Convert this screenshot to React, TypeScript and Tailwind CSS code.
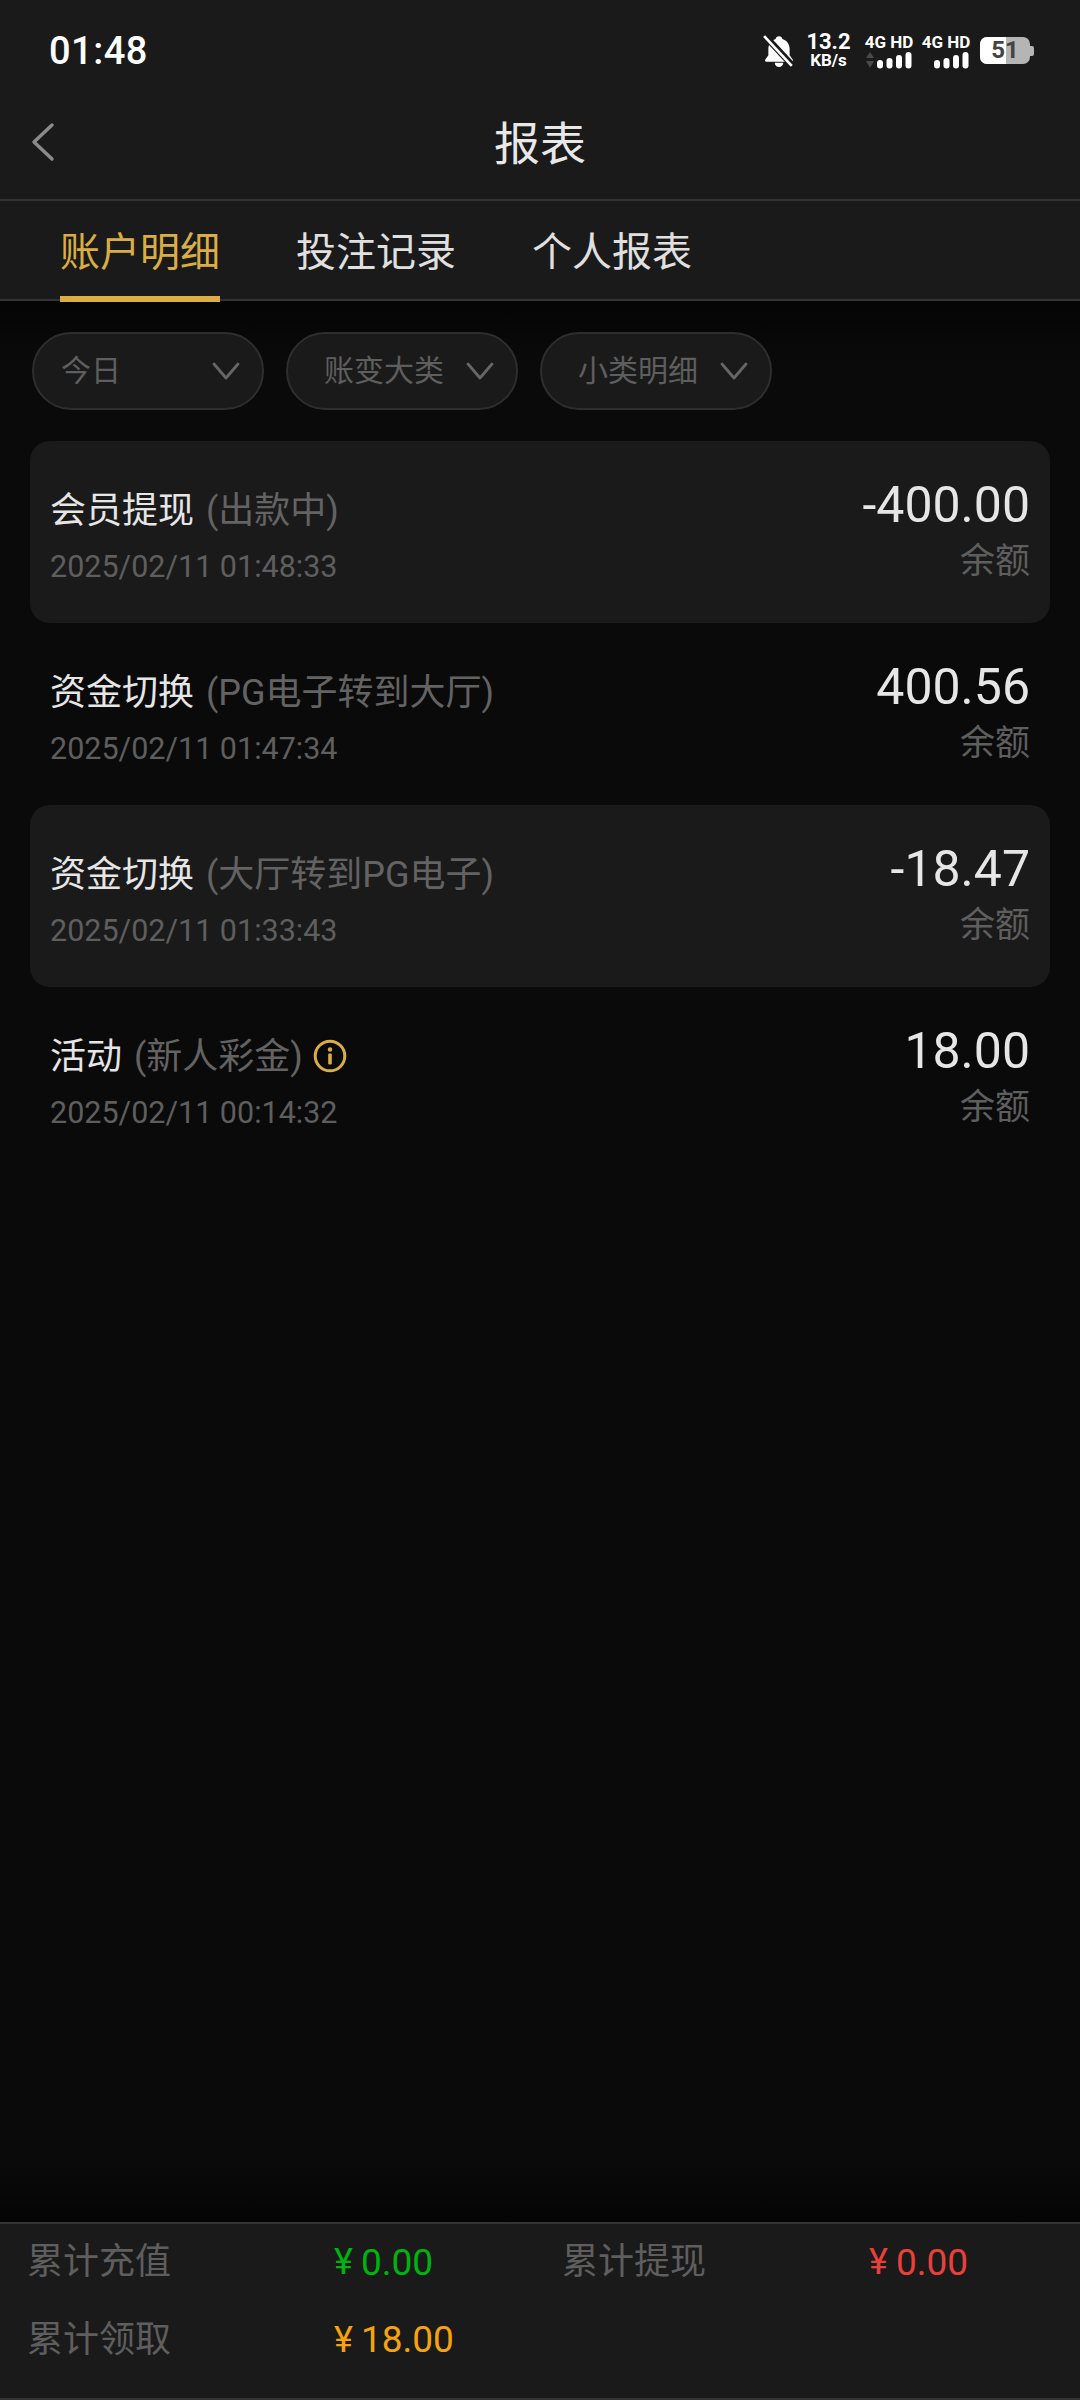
import React from "react";

const FONT = "font-['Roboto','Noto_Sans_CJK_SC',sans-serif]";

function Signal({ arrows }: { arrows?: boolean }) {
  return (
    <svg width="48" height="18" viewBox="0 0 48 18" className="block">
      {arrows && (
        <>
          <path d="M5 1 L9 7 L1 7 Z" fill="#4a4a4a" />
          <path d="M5 17 L9 10 L1 10 Z" fill="#4a4a4a" />
        </>
      )}
      <rect x="12" y="9" width="6" height="8.5" rx="3" fill="#fff" />
      <rect x="21.5" y="7" width="6" height="10.5" rx="3" fill="#fff" />
      <rect x="31" y="4" width="6" height="13.5" rx="3" fill="#fff" />
      <rect x="40.5" y="1" width="6" height="16.5" rx="3" fill="#fff" />
    </svg>
  );
}

function Net({ arrows }: { arrows?: boolean }) {
  return (
    <div className="flex w-[48px] flex-col items-center">
      <span className="whitespace-nowrap text-[17px] font-bold leading-[18px] text-white">4G HD</span>
      <Signal arrows={arrows} />
    </div>
  );
}

function StatusBar() {
  return (
    <div className="flex h-[101px] items-center justify-between pl-[49px] pr-[46px]">
      <span className="text-[38px] font-medium leading-none tracking-[0.5px] text-white">01:48</span>
      <div className="flex items-center">
        <svg width="32" height="34" viewBox="0 0 30 32" className="mr-[11px]">
          <path
            d="M15 2c1.7 0 3 1.1 3.2 2.6 4.3 1.3 6.8 5 6.8 9.4v6l3 4.2c.5.8 0 1.8-1 1.8H3c-1 0-1.500-1-1-1.800L5 20v-6c0-4.400 2.500-8.100 6.800-9.400C12 3.100 13.300 2 15 2z"
            fill="#fff"
          />
          <path d="M11 27h8c0 2.300-1.800 4-4 4s-4-1.700-4-4z" fill="#fff" />
          <path d="M2 2 L28 30" stroke="#1a1a1a" strokeWidth="6" />
          <path d="M1 2 L27 30" stroke="#fff" strokeWidth="2.500" />
        </svg>
        <div className="mr-[14px] flex w-[45px] flex-col items-center font-bold text-white">
          <span className="text-[22px] leading-[20px]">13.2</span>
          <span className="text-[17px] leading-[17px]">KB/s</span>
        </div>
        <div className="mr-[9px]">
          <Net arrows />
        </div>
        <div className="mr-[10px]">
          <Net />
        </div>
        <div className="relative flex h-[27px] w-[54px] items-center">
          <div className="relative h-[27px] w-[50px] overflow-hidden rounded-[7px] bg-[#b5b5b5]">
            <div className="h-full w-[26px] bg-white" />
          </div>
          <div className="h-[10px] w-[4px] rounded-r-[2px] bg-[#b5b5b5]" />
          <span className="absolute left-0 top-0 w-[50px] text-center text-[24px] font-bold leading-[27px] text-[#444]">
            51
          </span>
        </div>
      </div>
    </div>
  );
}

function Nav() {
  return (
    <div className="relative flex h-[100px] items-center justify-center border-b-2 border-[#333] pb-[12px]">
      <svg width="26" height="40" viewBox="0 0 26 40" className="absolute left-[29px] top-[21px]">
        <path d="M23 3 L5 20 L23 37" fill="none" stroke="#8a8a8a" strokeWidth="3.500" strokeLinecap="round" strokeLinejoin="round" />
      </svg>
      <span className="text-[46px] leading-none text-[#e8e8e8]">报表</span>
    </div>
  );
}

function Tabs() {
  return (
    <div className="flex h-[100px] border-b-2 border-[#333] pl-[60px]">
      <div className="relative mr-[76px] flex h-full items-center">
        <span className="pt-[6px] text-[40px] leading-none text-[#d9ae45]">账户明细</span>
        <div className="absolute -bottom-[3px] left-0 h-[6px] w-[160px] bg-[#d9ae45]" />
      </div>
      <div className="mr-[76px] flex h-full items-center">
        <span className="pt-[6px] text-[40px] leading-none text-[#e0e0e0]">投注记录</span>
      </div>
      <div className="flex h-full items-center">
        <span className="pt-[6px] text-[40px] leading-none text-[#e0e0e0]">个人报表</span>
      </div>
    </div>
  );
}

function Pill({ label, between }: { label: string; between?: boolean }) {
  return (
    <div
      className={`flex h-[78px] w-[232px] items-center rounded-[39px] border-2 border-[#2e2e2e] bg-[#1a1a1a] ${
        between ? "justify-between pl-[27px] pr-[22px]" : "justify-end gap-[22px] pr-[22px]"
      }`}
    >
      <span className="whitespace-nowrap text-[30px] leading-none text-[#5e5e5e]">{label}</span>
      <svg width="28" height="18" viewBox="0 0 28 18">
        <path d="M2 2 L14 16 L26 2" fill="none" stroke="#666" strokeWidth="2.800" strokeLinecap="round" strokeLinejoin="round" />
      </svg>
    </div>
  );
}

type Row = {
  title: string;
  sub: string;
  time: string;
  amount: string;
  card?: boolean;
  info?: boolean;
};

const rows: Row[] = [
  { title: "会员提现", sub: "(出款中)", time: "2025/02/11 01:48:33", amount: "-400.00", card: true },
  { title: "资金切换", sub: "(PG电子转到大厅)", time: "2025/02/11 01:47:34", amount: "400.56" },
  { title: "资金切换", sub: "(大厅转到PG电子)", time: "2025/02/11 01:33:43", amount: "-18.47", card: true },
  { title: "活动", sub: "(新人彩金)", time: "2025/02/11 00:14:32", amount: "18.00", info: true },
];

function RecordRow({ r }: { r: Row }) {
  return (
    <div className={`flex h-[182px] justify-between rounded-[20px] px-[20px] pt-[45px] ${r.card ? "bg-[#1a1a1a]" : ""}`}>
      <div className="flex flex-col">
        <div className="flex h-[50px] items-center">
          <span className="text-[36px] leading-[50px] text-[#e6e6e6]">{r.title}</span>
          <span className="ml-[12px] text-[36px] leading-[50px] text-[#636363]">{r.sub}</span>
          {r.info && (
            <svg width="34" height="34" viewBox="0 0 34 34" className="ml-[10px] mt-[-2px]">
              <circle cx="17" cy="17" r="14.800" fill="none" stroke="#d9ae45" strokeWidth="3" />
              <circle cx="17" cy="10.500" r="2.200" fill="#d9ae45" />
              <rect x="15.200" y="14.500" width="3.600" height="11" rx="1" fill="#d9ae45" />
            </svg>
          )}
        </div>
        <span className="mt-[11px] text-[30.5px] leading-[40px] text-[#5e5e5e]">{r.time}</span>
      </div>
      <div className="flex flex-col items-end">
        <span className="mt-[-11px] text-[50px] leading-[60px] text-[#e6e6e6]">{r.amount}</span>
        <span className="mt-[5px] text-[35px] leading-[44px] text-[#5e5e5e]">余额</span>
      </div>
    </div>
  );
}

function Money({ value, color }: { value: string; color: string }) {
  return (
    <span className={`flex items-center gap-[8px] self-center text-[37px] ${color}`}>
      <span className="text-[36px]">¥</span>
      <span>{value}</span>
    </span>
  );
}

function Footer() {
  return (
    <div className="grid h-[178px] grid-cols-[307px_228px_307px_1fr] grid-rows-[76px_79px] content-start border-y-2 border-[#333] bg-[#1a1a1a] pl-[27px] text-[36px] leading-none">
      <span className="self-center text-[#5e5e5e]">累计充值</span>
      <Money value="0.00" color="text-[#00b30f]" />
      <span className="self-center text-[#5e5e5e]">累计提现</span>
      <Money value="0.00" color="text-[#e8413a]" />
      <span className="self-center text-[#5e5e5e]">累计领取</span>
      <Money value="18.00" color="text-[#f5a30f]" />
    </div>
  );
}

export default function App() {
  return (
    <div className={`flex h-[2400px] w-[1080px] flex-col bg-[#0a0a0a] ${FONT}`}>
      <div className="bg-[#1a1a1a]">
        <StatusBar />
        <Nav />
        <Tabs />
      </div>
      <div className="flex-1 bg-[linear-gradient(#040404,#0a0a0a_60px,#0a0a0a_calc(100%-60px),#040404)] px-[30px] pt-[31px]">
        <div className="flex gap-[22px] pl-[2px]">
          <Pill label="今日" between />
          <Pill label="账变大类" />
          <Pill label="小类明细" />
        </div>
        <div className="mt-[31px] flex flex-col">
          {rows.map((r) => (
            <RecordRow key={r.time} r={r} />
          ))}
        </div>
      </div>
      <Footer />
    </div>
  );
}
